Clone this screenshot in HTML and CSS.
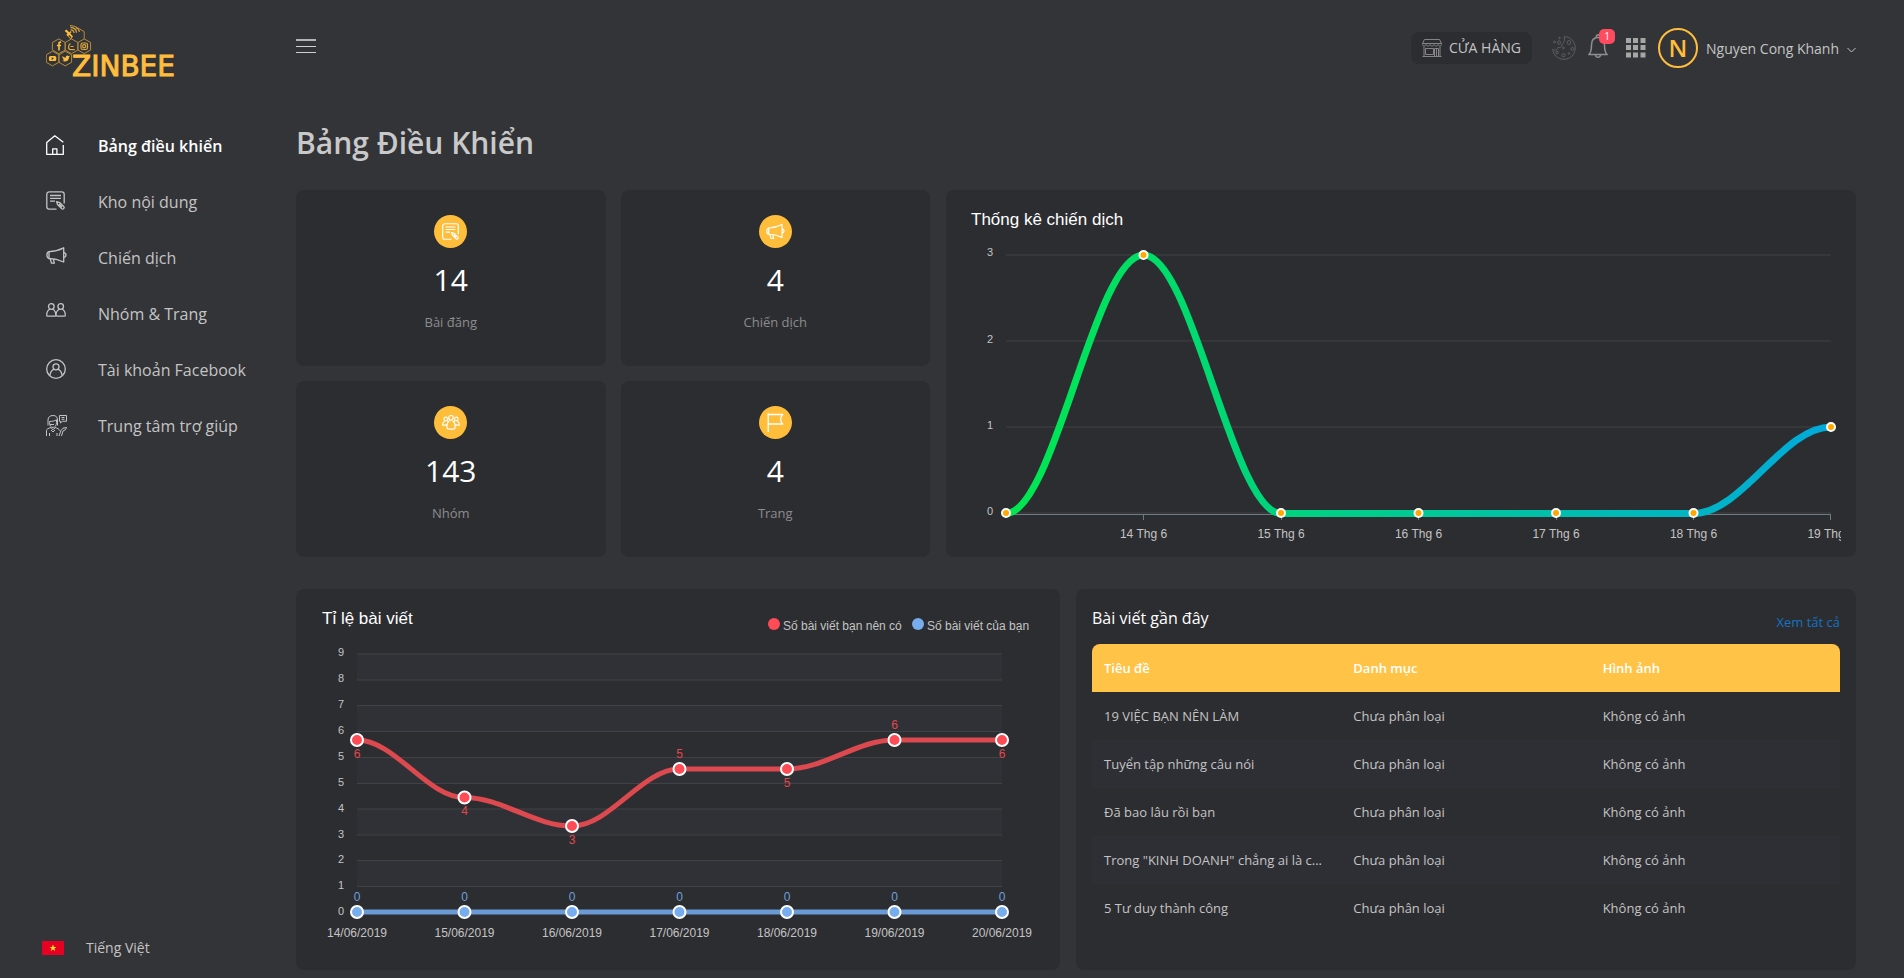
FILE: index.html
```html
<!DOCTYPE html>
<html lang="vi">
<head>
<meta charset="utf-8">
<meta name="viewport" content="width=device-width, initial-scale=1">
<title>Zinbee</title>
<link rel="stylesheet" href="styles.css">
</head>
<body>
<svg class="sprite" width="0" height="0" aria-hidden="true">
  <symbol id="i-post" viewBox="0 0 19 19">
    <path d="M10.5 18.2H3.2A2.4 2.4 0 0 1 .8 15.8V3.2A2.4 2.4 0 0 1 3.2.8h12.6a2.4 2.4 0 0 1 2.4 2.4v9.3"/>
    <path d="M4 4.5h11M4 7.3h11M4 10.2h5"/>
    <path d="M10.6 10.6l3 .9 4.3 4.3c.9 1.300-.9 2.900-2.100 2L11.500 13.500z M13 13l3 3"/>
  </symbol>
  <symbol id="i-horn" viewBox="0 0 21 17">
    <path d="M3 4.600C8 4.500 13 3.200 17.700.800v14.200C13 12.800 8 11.500 3 11.500z"/>
    <path d="M3 4.600C.2 5.200.2 11 3 11.500M17.700 5.600c3 .4 3 4.300 0 4.700M4.200 11.600l1.300 4.600h2.900l-.7-2.300c-.3-.9.5-1.100.4-2"/>
  </symbol>
  <symbol id="i-pair" viewBox="0 0 20 14">
    <circle cx="5.300" cy="3.500" r="2.800"/><circle cx="14.700" cy="3.500" r="2.800"/>
    <path d="M3.800 6C1.800 7.200.700 9.500.700 12.200c0 .8.300 1 .9 1h7.200c.7 0 1-.3 1-1C9.800 9.500 8.800 7.200 6.800 6M13.200 6c-1.600 1-2.900 3.200-3.200 5.500.100 1.200.400 1.700 1.300 1.700h7.100c.700 0 .900-.3.900-1 0-2.700-1.100-5-3.100-6.200"/>
  </symbol>
  <symbol id="i-user" viewBox="0 0 20 20">
    <circle cx="10" cy="10" r="9.300"/><circle cx="10" cy="7.800" r="3"/>
    <path d="M8.200 10.200C5.600 11.200 4.300 13.300 3.900 16.500M11.800 10.200c2.600 1 3.900 3.100 4.300 6.300"/>
  </symbol>
  <symbol id="i-team" viewBox="0 0 20 17">
    <circle cx="10" cy="3.200" r="2.600"/><circle cx="4" cy="4.400" r="2"/><circle cx="16" cy="4.400" r="2"/>
    <path d="M8.300 6.500C6.200 7.700 5.300 10 5.300 13c0 2 .7 3 2.200 3h5c1.500 0 2.200-1 2.200-3 0-3-.9-5.300-3-6.500M2.800 6.700C1.300 7.500.500 9.300.500 11.400h4.700M17.200 6.700c1.500.8 2.300 2.600 2.300 4.700h-4.700M5.500 6.600l1.200 1M14.500 6.600l-1.200 1"/>
  </symbol>
  <symbol id="i-flag" viewBox="0 0 17 19">
    <path d="M1.200 0v19M1.200 1.500h14.600c-3 2.600-3 6.800 0 9.500H1.200"/>
  </symbol>
</svg>

<div class="app">
  <aside class="sidebar">
    <a class="logo" href="#" aria-label="Zinbee">
      <svg width="144" height="64" viewBox="0 0 144 64" aria-hidden="true">
        <g class="logo-cells">
          <path d="M12.800 13.900 19.200 17.500V25l-6.400 3.600L6.400 25v-7.500zM25.500 13.900l6.400 3.600V25l-6.400 3.600-6.300-3.600v-7.500zM38.200 13.900l6.400 3.600V25l-6.400 3.600-6.300-3.600v-7.500zM6.500 26.200l6.400 3.600v7.500l-6.400 3.600L.3 37.300v-7.500zM19.200 26.200l6.400 3.600v7.500l-6.400 3.600-6.300-3.600v-7.500zM29 4.500l3-1.500 6.200 3.600v7.300M25.500 14v-3"/>
        </g>
        <g class="logo-fill">
          <path d="M12.200 25.500v-4.200h-1.300v-1.500h1.300v-1.300c0-1.500.8-2.300 2.900-2.100v1.500c-1 0-1.300.2-1.300.8v1.100h1.300l-.2 1.500h-1.100v4.200z"/>
          <path fill-rule="evenodd" d="M4.400 31.100h4.400q1.500 0 1.500 1.500v2q0 1.500-1.500 1.500H4.400q-1.500 0-1.500-1.500v-2q0-1.500 1.500-1.500zm1.300 1.200v2.600l2.300-1.300z"/>
          <path d="M16.500 31c1 1.200 2 1.600 3.200 1.700 0-2.200 1.900-2.600 2.900-1.600l1.200-.4-.7 1.500c0 3.700-4.100 5.300-6.900 3.600 1 0 1.700-.2 2.300-.7-1-.2-1.400-.8-1.600-1.300h.7c-1-.5-1.400-1.500-1.100-2.800z"/>
          <path d="M20.500 4.500l3 3 1-1.500 1 1-1.200 1.500 2.700 3-1 1.200-2.700-2.600-1 .8 3 2.600-1 .3-4-4 1.300-1.300-3-2.500z"/>
        </g>
        <g class="logo-line">
          <path d="M24.500 5c2-.3 3.600 1.200 3.500 3M24.500 2.700c3.500-.3 6 2 6 5M24 .8c5-.4 8.500 2.400 9.500 6"/>
          <path d="M24.500 18.500c-2.300 1.200-3 6 .3 6.200h4M24.500 21.500h3"/>
          <rect x="35" y="18" width="6.500" height="6.500" rx="1.800"/><circle cx="38.200" cy="21.200" r="1.600"/>
        </g>
        <text class="logo-text" x="26" y="51">ZINBEE</text>
      </svg>
    </a>
    <nav class="menu">
      <a class="menu-item is-active" href="#">
        <span class="menu-icon"><svg class="ico" width="18" height="20" viewBox="0 0 18 20"><path d="M.7 7.500 8.800.800l8.500 6.400M.7 7.300v12h16.600V10M6.700 19.300v-5.500h4.200v5.500"/></svg></span>
        <span>Bảng điều khiển</span>
      </a>
      <a class="menu-item" href="#">
        <span class="menu-icon"><svg class="ico" width="19" height="19"><use href="#i-post"/></svg></span>
        <span>Kho nội dung</span>
      </a>
      <a class="menu-item" href="#">
        <span class="menu-icon"><svg class="ico" width="21" height="17"><use href="#i-horn"/></svg></span>
        <span>Chiến dịch</span>
      </a>
      <a class="menu-item" href="#">
        <span class="menu-icon"><svg class="ico" width="20" height="14"><use href="#i-pair"/></svg></span>
        <span>Nhóm &amp; Trang</span>
      </a>
      <a class="menu-item" href="#">
        <span class="menu-icon"><svg class="ico" width="20" height="20"><use href="#i-user"/></svg></span>
        <span>Tài khoản Facebook</span>
      </a>
      <a class="menu-item" href="#">
        <span class="menu-icon"><svg class="ico ico-thin" width="21" height="21" viewBox="0 0 21 21"><path d="M2 10.500V5C2 2 4 .5 7 .5s4.500 1.500 4.500 4.500v5.500M3.500 7.500c0 3 1.500 5 3.500 5s3.500-2 3.500-5V4.800C8.500 6 6 6.500 3.500 6.500zM4 9.500h4M5 12.500l2 2.300 2.300-2.300M.5 21v-5.500c0-1.500 1.500-2 4.500-3M9 12.500c2.500.7 4 1.500 5 3.300M3.500 21v-3M5 15l2 2 2-2M11 21v-3M13 21l2-5.500 2-2.300 3.500-.700-1 2.200-2.500 1.300L15.500 21M13.500.5h7v5.800h-4.200l-1.800 1.700V6.300h-1zM15.500 2.500h3M15.500 4.300h3"/></svg></span>
        <span>Trung tâm trợ giúp</span>
      </a>
    </nav>
    <button class="language" type="button">
      <svg width="22" height="14" viewBox="0 0 22 14" aria-hidden="true"><rect width="22" height="14" fill="#e70021"/><path fill="#ffe81f" d="M11 3.500l.9 2.500h2.500l-2 1.500.8 2.500-2.200-1.500-2.200 1.500.8-2.500-2-1.500h2.500z"/></svg>
      <span>Tiếng Việt</span>
    </button>
  </aside>

  <main class="main">
    <header class="topbar">
      <button class="icon-button raised" type="button" aria-label="Menu">
        <svg width="20" height="16" viewBox="0 0 20 16"><path stroke="#b4b4b4" stroke-width="2" d="M0 1h20"/><path stroke="#cfcfcf" d="M0 7.500h20M0 13.500h20"/></svg>
      </button>
      <div class="tools">
        <button class="store" type="button">
          <svg class="ico ico-dim" width="20" height="18" viewBox="0 0 20 18"><path d="M2.500.500h15M2.500.500.500 4.500h19L17.500.500M.500 4.500v1c0 2 3 2 3.500 0 .5 2 3.500 2 4 0 .5 2 3.500 2 4 0 .5 2 3.500 2 4 0 .500 2 3.500 2 3.500 0v-1M2 7.500v10M18 7.500v10M.500 17.500h19M3.500 9.500h8v6h-8zM12.500 17.500v-8h4v8M14.500 9.500v8"/></svg>
          <span>CỬA HÀNG</span>
        </button>
        <button class="icon-button cookie" type="button" aria-label="Cookie">
          <svg class="ico ico-faint" width="24" height="24" viewBox="0 0 24 24"><path d="M12 .8C19 .3 23.200 6 23.200 12c0 6.500-5 11.300-11.200 11.300C6 23.300 1 19 .8 13.300c2 1.500 5 .5 5.200-2 2.500 1 4.500-.800 3.700-3C12.500 7.500 12.800 3.500 12 .8z"/><circle cx="17" cy="6.500" r="1.900"/><circle cx="11.500" cy="12" r=".9"/><circle cx="20.500" cy="13" r="1.500"/><circle cx="5" cy="16.500" r="1.300"/><circle cx="11.500" cy="19.300" r="1.600"/><circle cx="17" cy="17.500" r=".8"/><circle cx="7" cy="6.500" r="1.600"/><circle cx="2.500" cy="6" r=".9"/><circle cx="7.500" cy="2" r=".8"/></svg>
        </button>
        <button class="icon-button bell" type="button" aria-label="Thông báo">
          <svg class="ico ico-mid" width="20" height="24" viewBox="0 0 20 24"><path d="M.8 20.500h18.400c-2.200-1.700-2.700-4-2.700-9.500 0-4-2-7.500-6.500-7.500S3.500 7 3.500 11c0 5.500-.5 7.800-2.700 9.500zM8.300 3.500c-.5-3.600 3.900-3.600 3.400 0M7.500 21c.4 3 4.600 3 5 0"/></svg>
          <span class="badge">1</span>
        </button>
        <button class="icon-button apps" type="button" aria-label="Ứng dụng">
          <svg width="20" height="20" viewBox="0 0 20 20"><path fill="#a6a6a6" d="M0 0h5v5H0zM7 0h5v5H7zM14.500 0h5v5h-5zM0 7h5v5H0zM7 7h5v5H7zM14.500 7h5v5h-5zM0 14.500h5v5H0zM7 14.500h5v5H7zM14.500 14.500h5v5h-5z"/></svg>
        </button>
        <button class="account" type="button">
          <span class="avatar">N</span>
          <span class="account-name">Nguyen Cong Khanh</span>
          <svg class="ico" width="9" height="10" viewBox="0 0 9 10"><path stroke-width="1" d="M.5 5l4 4 4-4"/></svg>
        </button>
      </div>
    </header>

    <h1 class="page-title">Bảng Điều Khiển</h1>

    <div class="row row-top">
      <div class="stats">
        <section class="card stat">
          <span class="stat-icon"><svg class="ico" width="17" height="17"><use href="#i-post"/></svg></span>
          <strong class="stat-value">14</strong><span class="stat-label">Bài đăng</span>
        </section>
        <section class="card stat">
          <span class="stat-icon"><svg class="ico" width="19" height="17"><use href="#i-horn"/></svg></span>
          <strong class="stat-value">4</strong><span class="stat-label">Chiến dịch</span>
        </section>
        <section class="card stat">
          <span class="stat-icon"><svg class="ico" width="20" height="15"><use href="#i-team"/></svg></span>
          <strong class="stat-value">143</strong><span class="stat-label">Nhóm</span>
        </section>
        <section class="card stat">
          <span class="stat-icon"><svg class="ico" width="17" height="19"><use href="#i-flag"/></svg></span>
          <strong class="stat-value">4</strong><span class="stat-label">Trang</span>
        </section>
      </div>

      <section class="card chart-card">
        <svg class="chart" viewBox="0 0 880 337" role="img" aria-label="Thống kê chiến dịch">
          <defs>
            <linearGradient id="campaign" gradientUnits="userSpaceOnUse" x1="45" y1="0" x2="870" y2="0">
              <stop offset="0" stop-color="#00e84f"/><stop offset="1" stop-color="#00aadb"/>
            </linearGradient>
          </defs>
          <text class="chart-title" x="10" y="20">Thống kê chiến dịch</text>
          <path class="grid-line" d="M45 50h825M45 136h825M45 222h825M45 308h825"/>
          <path class="axis-line" d="M45 309.500h825M182.500 309v6M320.500 309v6M457.500 309v6M595.500 309v6M732.500 309v6M869.500 309v6"/>
          <g class="y-labels"><text x="32" y="51">3</text><text x="32" y="138">2</text><text x="32" y="224">1</text><text x="32" y="310">0</text></g>
          <path class="campaign-line" d="M45 308.500C93 308.500 134 50 182.500 50S272 308.500 320 308.500H732.500C781 308.500 822 222 870 222"/>
          <g class="campaign-dots"><circle cx="45" cy="308" r="4"/><circle cx="182.500" cy="50" r="4"/><circle cx="320" cy="308" r="4"/><circle cx="457.500" cy="308" r="4"/><circle cx="595" cy="308" r="4"/><circle cx="732.500" cy="308" r="4"/><circle cx="870" cy="222" r="4"/></g>
          <g class="x-labels"><text x="182.500" y="333">14 Thg 6</text><text x="320" y="333">15 Thg 6</text><text x="457.500" y="333">16 Thg 6</text><text x="595" y="333">17 Thg 6</text><text x="732.500" y="333">18 Thg 6</text><text x="870" y="333">19 Thg 6</text></g>
        </svg>
      </section>
    </div>

    <div class="row row-bottom">
      <section class="card chart-card">
        <svg class="chart" viewBox="0 0 734 351" role="img" aria-label="Tỉ lệ bài viết">
          <text class="chart-title" x="11" y="20">Tỉ lệ bài viết</text>
          <g class="legend"><circle class="red" cx="463" cy="20" r="6"/><text x="472" y="26">Số bài viết bạn nên có</text><circle class="blue" cx="607" cy="20" r="6"/><text x="616" y="26">Số bài viết của bạn</text></g>
          <path class="bands" d="M46 50h645v26H46zM46 101.500h645v26H46zM46 153h645v26H46zM46 205h645v26H46zM46 256.500h645v26H46z"/>
          <path class="grid-line" d="M46 50h645M46 76h645M46 101.500h645M46 127.500h645M46 153.500h645M46 179.500h645M46 205h645M46 231h645M46 256.500h645M46 282.500h645"/>
          <g class="y-labels"><text x="33" y="52">9</text><text x="33" y="78">8</text><text x="33" y="104">7</text><text x="33" y="130">6</text><text x="33" y="156">5</text><text x="33" y="182">5</text><text x="33" y="208">4</text><text x="33" y="234">3</text><text x="33" y="259">2</text><text x="33" y="285">1</text><text x="33" y="311">0</text></g>
          <path class="posts-line red-line" d="M46 136C84 136 116 193.500 153.500 193.500S223 222 261 222 331 165 368.500 165H476C514 165 546 136 583.500 136H691"/>
          <path class="posts-line blue-line" d="M46 308h645"/>
          <g class="posts-dots red"><circle cx="46" cy="136" r="6"/><circle cx="153.500" cy="193.500" r="6"/><circle cx="261" cy="222" r="6"/><circle cx="368.500" cy="165" r="6"/><circle cx="476" cy="165" r="6"/><circle cx="583.500" cy="136" r="6"/><circle cx="691" cy="136" r="6"/></g>
          <g class="posts-dots blue"><circle cx="46" cy="308" r="6"/><circle cx="153.500" cy="308" r="6"/><circle cx="261" cy="308" r="6"/><circle cx="368.500" cy="308" r="6"/><circle cx="476" cy="308" r="6"/><circle cx="583.500" cy="308" r="6"/><circle cx="691" cy="308" r="6"/></g>
          <g class="values red"><text x="46" y="154">6</text><text x="153.500" y="211">4</text><text x="261" y="240">3</text><text x="368.500" y="154">5</text><text x="476" y="183">5</text><text x="583.500" y="125">6</text><text x="691" y="154">6</text></g>
          <g class="values blue"><text x="46" y="297">0</text><text x="153.500" y="297">0</text><text x="261" y="297">0</text><text x="368.500" y="297">0</text><text x="476" y="297">0</text><text x="583.500" y="297">0</text><text x="691" y="297">0</text></g>
          <g class="x-labels"><text x="46" y="333">14/06/2019</text><text x="153.500" y="333">15/06/2019</text><text x="261" y="333">16/06/2019</text><text x="368.500" y="333">17/06/2019</text><text x="476" y="333">18/06/2019</text><text x="583.500" y="333">19/06/2019</text><text x="691" y="333">20/06/2019</text></g>
        </svg>
      </section>

      <section class="card recent">
        <div class="recent-head">
          <h2 class="recent-title">Bài viết gần đây</h2>
          <a class="recent-link" href="#">Xem tất cả</a>
        </div>
        <table class="table">
          <thead><tr><th scope="col">Tiêu đề</th><th scope="col">Danh mục</th><th scope="col">Hình ảnh</th></tr></thead>
          <tbody>
            <tr><td>19 VIỆC BẠN NÊN LÀM</td><td>Chưa phân loại</td><td>Không có ảnh</td></tr>
            <tr><td>Tuyển tập những câu nói</td><td>Chưa phân loại</td><td>Không có ảnh</td></tr>
            <tr><td>Đã bao lâu rồi bạn</td><td>Chưa phân loại</td><td>Không có ảnh</td></tr>
            <tr><td>Trong "KINH DOANH" chẳng ai là c...</td><td>Chưa phân loại</td><td>Không có ảnh</td></tr>
            <tr><td>5 Tư duy thành công</td><td>Chưa phân loại</td><td>Không có ảnh</td></tr>
          </tbody>
        </table>
      </section>
    </div>
  </main>
</div>
</body>
</html>
```
FILE: styles.css
```css
* { box-sizing: border-box; }

body {
  margin: 0;
  background: #333438;
  color: #c4c4c4;
  font-family: "Open Sans", "Noto Sans", sans-serif;
  font-size: 13px;
}

a { color: inherit; text-decoration: none; }

button {
  padding: 0;
  border: 0;
  background: none;
  color: inherit;
  font: inherit;
  cursor: pointer;
}

svg { display: block; flex: none; }
.sprite { position: absolute; }

.ico {
  fill: none;
  stroke: currentColor;
  stroke-width: 1.3;
  stroke-linejoin: round;
}
.ico-thin { stroke-width: 1; }
.ico-dim { stroke: #858585; stroke-width: 1; }
.ico-mid { stroke: #8f8f8f; stroke-width: 1.5; }
.ico-faint { stroke: #5e5f63; stroke-width: 1; }

.app { display: flex; min-height: 100vh; }

/* Sidebar */
.sidebar {
  display: flex;
  flex: 0 0 296px;
  flex-direction: column;
  padding: 25px 0 18px 42px;
}
.logo { margin-left: 4px; height: 93px; }
.logo-cells { fill: none; stroke: #b58a3c; stroke-width: 1; }
.logo-fill { fill: #ffbd3c; }
.logo-line { fill: none; stroke: #dca63c; stroke-width: 1.2; }
.logo-text { fill: #ffbd3c; stroke: #ffbd3c; font: 28px "DejaVu Sans", sans-serif; }

.menu { margin-left: 4px; }
.menu-item {
  display: flex;
  align-items: flex-start;
  padding: 16px 0;
  font-size: 16px;
  line-height: 24px;
}
.menu-icon { flex: 0 0 52px; padding-top: 1px; }
.is-active { color: #fff; font-weight: 600; }

.language {
  display: flex;
  align-items: center;
  gap: 22px;
  margin-top: auto;
  font-size: 14px;
  line-height: 24px;
}

/* Top bar */
.main { flex: 1; min-width: 0; padding: 28px 48px 8px 0; }
.topbar { display: flex; align-items: center; height: 40px; }
.tools { display: flex; align-items: center; margin-left: auto; }
.icon-button { position: relative; }
.raised { padding-bottom: 2px; }
.store {
  display: flex;
  align-items: center;
  gap: 7px;
  height: 32px;
  padding: 0 11px 1px;
  border-radius: 8px;
  background: #2c2d30;
  font-size: 14px;
}
.cookie { margin-left: 20px; }
.bell { margin-left: 12px; padding-bottom: 4px; }
.badge {
  position: absolute;
  top: -5px;
  left: 11px;
  width: 16px;
  height: 15px;
  border-radius: 5px;
  background: #ff4b5f;
  color: #fff;
  font-size: 10px;
  line-height: 15px;
}
.apps { margin-left: 18px; }
.account { display: flex; align-items: center; gap: 8px; margin-left: 12px; font-size: 14px; }
.avatar {
  width: 40px;
  height: 40px;
  border: 2px solid #ffbd3c;
  border-radius: 50%;
  color: #ffbd3c;
  font-size: 24px;
  font-weight: 600;
  line-height: 36px;
}

.page-title {
  margin: 55px 0 27px;
  color: #c9c9c9;
  font-size: 30px;
  font-weight: 600;
  line-height: 40px;
}

/* Cards */
.card { border-radius: 8px; background: #2c2d30; }
.row { display: grid; gap: 16px; }
.row-top { grid-template-columns: minmax(0, 634fr) minmax(0, 910fr); }
.row-bottom { grid-template-columns: minmax(0, 764fr) minmax(0, 780fr); margin-top: 32px; }

.stats { display: grid; grid-template-columns: 1fr 1fr; gap: 15px; }
.stat { display: flex; flex-direction: column; align-items: center; padding-top: 25px; }
.stat-icon {
  display: flex;
  align-items: center;
  justify-content: center;
  width: 33px;
  height: 33px;
  border-radius: 50%;
  background: #ffbd3c;
  color: #fff;
}
.stat-value { margin: 12px 0; color: #fff; font-size: 30px; font-weight: 400; line-height: 40px; }
.stat-label { color: #8c8c8e; line-height: 20px; }

/* Charts */
.chart-card { padding: 15px; }
.chart { width: 100%; height: auto; overflow: hidden; fill: #c4c4c4; font: 12px "Liberation Sans", Arial, sans-serif; }
.chart-title { fill: #fff; font-size: 17px; }
.grid-line { stroke: #414245; stroke-width: 1; fill: none; }
.axis-line { stroke: #6d7a82; fill: none; }
.y-labels { font-size: 11px; text-anchor: end; }
.x-labels, .values { text-anchor: middle; }
.campaign-line { fill: none; stroke: url(#campaign); stroke-width: 7; }
.campaign-dots { fill: #ffa800; stroke: #fff; stroke-width: 2; }
.bands { fill: #303136; }
.red { fill: #ff4b55; }
.blue { fill: #77acee; }
.posts-line { fill: none; stroke-width: 5; }
.red-line { stroke: #dc494f; }
.blue-line { stroke: #6b9bd6; }
.posts-dots { stroke: #fff; stroke-width: 2; }
.values.red { fill: #e2474f; }
.values.blue { fill: #6f9fdb; }

/* Recent posts */
.recent { padding: 16px; }
.recent-head { display: flex; justify-content: space-between; height: 39px; padding-bottom: 10px; line-height: 24px; }
.recent-title { margin: 0; padding-top: 1px; color: #fff; font-size: 16px; font-weight: 400; }
.recent-link { align-self: flex-end; color: #1373c4; }
.table { width: 100%; border-spacing: 0; table-layout: fixed; text-align: left; }
.table th, .table td { height: 48px; padding: 0 12px; white-space: nowrap; }
.table th { background: #ffc447; color: #fff; font-weight: 600; }
.table th:first-child { border-top-left-radius: 8px; }
.table th:last-child { border-top-right-radius: 8px; }
.table tbody tr:nth-child(even) { background: #2e2f34; }
```
